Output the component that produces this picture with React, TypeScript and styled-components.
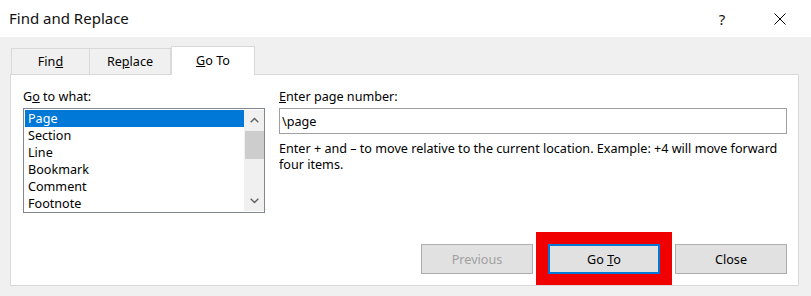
import React, { useState } from 'react'
import styled, { createGlobalStyle } from 'styled-components'

const GlobalStyle = createGlobalStyle`
  html, body {
    margin: 0;
    padding: 0;
    background: #f0f0f0;
  }
  body {
    font-family: 'Noto Sans', 'Open Sans', sans-serif;
    color: #000;
  }
`

const Dialog = styled.div`
  width: 811px;
  height: 296px;
  background: #f0f0f0;
  display: flex;
  flex-direction: column;
`

const TitleBar = styled.div`
  height: 37px;
  background: #fff;
  display: flex;
  align-items: center;
  padding-left: 9px;
  box-sizing: border-box;
`

const Title = styled.div`
  font-size: 15px;
  color: #111;
  padding-bottom: 1px;
`

const TitleButtons = styled.div`
  margin-left: auto;
  display: flex;
  align-items: center;
  gap: 12px;
  padding-right: 8px;
`

const TitleButton = styled.div`
  width: 46px;
  height: 37px;
  display: flex;
  align-items: center;
  justify-content: center;
  font-size: 15px;
  color: #111;
`

const Body = styled.div`
  padding: 9px 12px 0 10px;
`

const TabStrip = styled.div`
  display: flex;
  align-items: flex-end;
  height: 28px;
  padding-left: 1px;
  position: relative;
  z-index: 1;
`

const Tab = styled.div<{ $active?: boolean; $first?: boolean; $width: number }>`
  width: ${(p) => p.$width}px;
  height: ${(p) => (p.$active ? 29 : 26)}px;
  box-sizing: border-box;
  border: 1px solid #d9d9d9;
  border-bottom: none;
  border-left: ${(p) => (p.$first || p.$active ? '1px solid #d9d9d9' : 'none')};
  background: ${(p) => (p.$active ? '#fff' : '#f0f0f0')};
  margin-bottom: ${(p) => (p.$active ? '-1px' : '0')};
  display: flex;
  justify-content: center;
  padding-top: ${(p) => (p.$active ? 5 : 4)}px;
  font-size: 12.6px;
`

const Panel = styled.div`
  height: 212px;
  box-sizing: border-box;
  border: 1px solid #d9d9d9;
  background: #fff;
  display: flex;
  flex-direction: column;
  padding: 14px 11px 0 12px;
`

const Columns = styled.div`
  display: grid;
  grid-template-columns: 242px 1fr;
  column-gap: 14px;
`

const Column = styled.div`
  display: flex;
  flex-direction: column;
`

const Label = styled.div`
  font-size: 12.6px;
  line-height: 16px;
  height: 16px;
  margin-bottom: 3px;
`

const ListBox = styled.div`
  height: 105px;
  box-sizing: border-box;
  border: 1px solid #828790;
  display: flex;
  padding: 1px 0 1px 1px;
`

const Items = styled.div`
  flex: 1;
  display: flex;
  flex-direction: column;
`

const Item = styled.div<{ $selected?: boolean }>`
  height: 17px;
  line-height: 17px;
  font-size: 12.6px;
  padding-left: 3px;
  background: ${(p) => (p.$selected ? '#0078d7' : 'transparent')};
  color: ${(p) => (p.$selected ? '#fff' : '#000')};
  cursor: default;
`

const ScrollBar = styled.div`
  width: 20px;
  background: #f0f0f0;
  display: flex;
  flex-direction: column;
  align-items: center;
`

const ScrollArrow = styled.div`
  height: 20px;
  width: 20px;
  display: flex;
  align-items: center;
  justify-content: center;
`

const Thumb = styled.div`
  width: 19px;
  height: 28px;
  margin-top: 1px;
  background: #cdcdcd;
`

const Track = styled.div`
  flex: 1;
`

const Input = styled.input`
  height: 26px;
  box-sizing: border-box;
  border: 1px solid #a0a0a0;
  padding: 0 2px;
  font-family: inherit;
  font-size: 12.6px;
  color: #000;
  outline: none;
`

const Hint = styled.div`
  font-size: 12.6px;
  line-height: 16px;
  margin-top: 7px;
`

const ButtonRow = styled.div`
  margin-top: auto;
  display: flex;
  justify-content: flex-end;
  align-items: flex-end;
  gap: 3px;
`

const Button = styled.button<{ $disabled?: boolean; $default?: boolean }>`
  width: 112px;
  height: 30px;
  box-sizing: border-box;
  font-family: inherit;
  font-size: 12.6px;
  background: #e1e1e1;
  border: ${(p) => (p.$default ? '2px solid #0078d7' : '1px solid #adadad')};
  color: ${(p) => (p.$disabled ? '#a0a0a0' : '#000')};
  padding: 0;
  margin-bottom: 11px;
  cursor: default;
`

const Highlight = styled.div`
  background: #f00000;
  padding: 12px 12px 11px;
  display: flex;
  & > button {
    margin-bottom: 0;
  }
`

const Chevron = ({ up }: { up?: boolean }) => (
  <svg width='9' height='6' viewBox='0 0 9 6'>
    <path
      d={up ? 'M0.7 5.2 L4.5 1.4 L8.3 5.2' : 'M0.7 0.8 L4.5 4.6 L8.3 0.8'}
      fill='none'
      stroke='#606060'
      strokeWidth='1.4'
    />
  </svg>
)

const items = ['Page', 'Section', 'Line', 'Bookmark', 'Comment', 'Footnote']

const App = () => {
  const [selected, setSelected] = useState(0)
  const [value, setValue] = useState('\\page')

  return (
    <Dialog>
      <GlobalStyle />
      <TitleBar>
        <Title>Find and Replace</Title>
        <TitleButtons>
          <TitleButton>?</TitleButton>
          <TitleButton>
            <svg width='12' height='12' viewBox='0 0 12 12'>
              <path d='M0.5 0.5 L11.5 11.5 M11.5 0.5 L0.5 11.5' stroke='#000' strokeWidth='1' />
            </svg>
          </TitleButton>
        </TitleButtons>
      </TitleBar>
      <Body>
        <TabStrip>
          <Tab $width={79} $first>
            <span>
              Fin<u>d</u>
            </span>
          </Tab>
          <Tab $width={81}>
            <span>
              Re<u>p</u>lace
            </span>
          </Tab>
          <Tab $width={84} $active>
            <span>
              <u>G</u>o To
            </span>
          </Tab>
        </TabStrip>
        <Panel>
          <Columns>
            <Column>
              <Label>
                G<u>o</u> to what:
              </Label>
              <ListBox>
                <Items>
                  {items.map((item, i) => (
                    <Item key={item} $selected={i === selected} onClick={() => setSelected(i)}>
                      {item}
                    </Item>
                  ))}
                </Items>
                <ScrollBar>
                  <ScrollArrow>
                    <Chevron up />
                  </ScrollArrow>
                  <Thumb />
                  <Track />
                  <ScrollArrow>
                    <Chevron />
                  </ScrollArrow>
                </ScrollBar>
              </ListBox>
            </Column>
            <Column>
              <Label>
                <u>E</u>nter page number:
              </Label>
              <Input value={value} onChange={(e) => setValue(e.target.value)} />
              <Hint>
                Enter + and – to move relative to the current location. Example: +4 will move forward
                <br />
                four items.
              </Hint>
            </Column>
          </Columns>
          <ButtonRow>
            <Button $disabled>Previous</Button>
            <Highlight>
              <Button $default>
                Go <u>T</u>o
              </Button>
            </Highlight>
            <Button>Close</Button>
          </ButtonRow>
        </Panel>
      </Body>
    </Dialog>
  )
}

export default App
